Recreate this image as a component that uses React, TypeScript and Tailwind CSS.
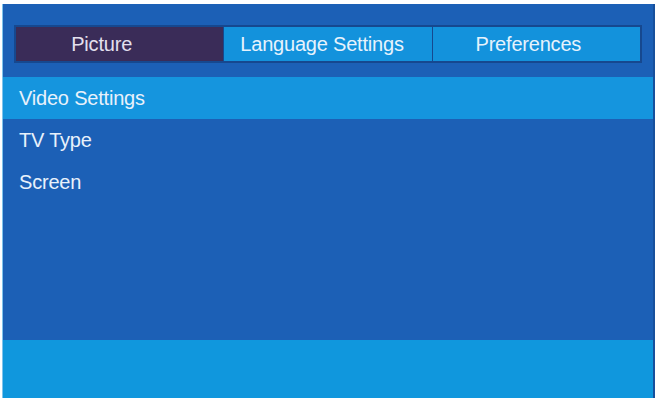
export default function App() {
  const tabs = [
    { label: "Picture", active: true, pad: "pr-[36px]" },
    { label: "Language Settings", active: false, pad: "pr-[12px]" },
    { label: "Preferences", active: false, pad: "pr-[16px]" },
  ];
  const items = ["Video Settings", "TV Type", "Screen"];

  return (
    <div
      className="w-[659px] h-[398px] bg-white pt-[4px] overflow-hidden"
      style={{ fontFamily: '"Liberation Sans", Arial, sans-serif' }}
    >
      <div className="h-[394px] ml-[2px] mr-[4px] bg-[#1c60b6] flex flex-col border-r-2 border-[#17509c] border-l border-l-[#7fc4ec]">
        {/* tabs */}
        <div className="pt-[21px] px-[11px]">
          <div className="grid grid-cols-3 h-[38px] border-2 border-[#16488f] bg-[#16488f] gap-[1px]">
            {tabs.map((t) => (
              <div
                key={t.label}
                className={`flex items-center justify-center text-[20px] tracking-[-0.2px] ${t.pad} ${
                  t.active ? "bg-[#3a2c58] text-[#e4e0ee]" : "bg-[#1392dc] text-[#e6f2fc]"
                }`}
              >
                {t.label}
              </div>
            ))}
          </div>
        </div>

        {/* list */}
        <div className="mt-[14px] flex flex-col">
          {items.map((it, i) => (
            <div
              key={it}
              className={`h-[42px] flex items-center px-[16px] text-[20px] tracking-[-0.2px] text-[#e8f1fb] ${
                i === 0 ? "bg-[#1595de]" : ""
              }`}
            >
              {it}
            </div>
          ))}
        </div>

        <div className="flex-1" />

        {/* bottom bar */}
        <div className="h-[58px] bg-[#1097dd]" />
      </div>
    </div>
  );
}
